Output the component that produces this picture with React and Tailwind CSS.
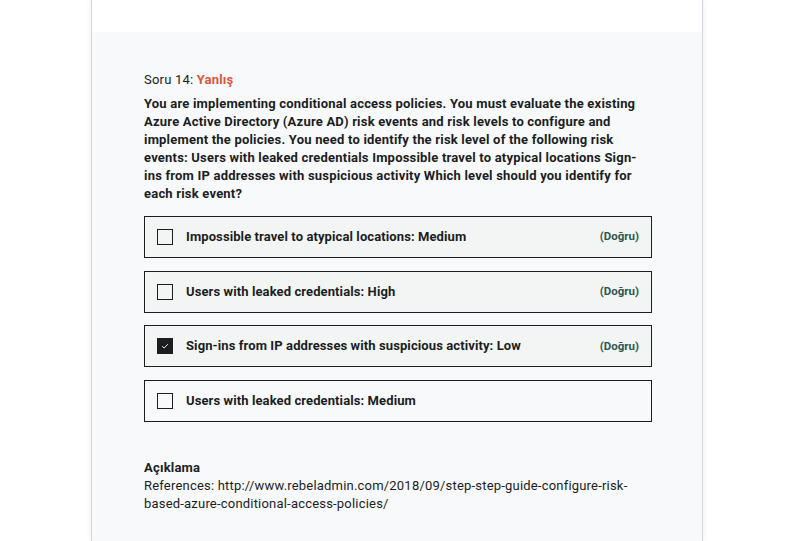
import React from "react";

const options = [
  { text: "Impossible travel to atypical locations: Medium", correct: true, checked: false },
  { text: "Users with leaked credentials: High", correct: true, checked: false },
  { text: "Sign-ins from IP addresses with suspicious activity: Low", correct: true, checked: true },
  { text: "Users with leaked credentials: Medium", correct: false, checked: false },
];

const Option = ({ text, correct, checked }) => (
  <div
    className={
      "flex items-center h-[42px] border border-[#1c1d1f] pl-[12px] pr-[12px] " +
      (correct ? "bg-[#f2f5f4]" : "bg-[#f7f9fa]")
    }
  >
    {checked ? (
      <span className="w-[16px] h-[16px] bg-[#1c1d1f] flex items-center justify-center shrink-0">
        <svg width="10" height="10" viewBox="0 0 10 10" fill="none">
          <path d="M2.2 5.3 L4.2 7 L7.8 3.2" stroke="#fff" strokeWidth="0.9" />
        </svg>
      </span>
    ) : (
      <span className="w-[16px] h-[16px] border border-[#1c1d1f] shrink-0" />
    )}
    <span className="ml-[13px] flex-1 text-[13px] font-bold text-[#1c1d1f] tracking-[0.1px]">{text}</span>
    {correct && <span className="text-[11.5px] font-bold text-[#2f5751]">(Doğru)</span>}
  </div>
);

export default function App() {
  return (
    <div className="w-[801px] h-[541px] bg-white overflow-hidden font-['Roboto',sans-serif]">
      <div className="ml-[91px] w-[612px] h-[541px] border-x border-[#d1d7dc] shadow-[0_0_6px_rgba(0,0,0,0.08)] flex flex-col">
        <div className="h-[32px] bg-white" />
        <div className="flex-1 bg-[#f7f9fa] pl-[52px] pr-[50px] pt-[39px]">
          <div className="text-[13px] text-[#1c1d1f] leading-[18px] tracking-[0.2px]">
            Soru 14: <span className="font-bold text-[#d9573c]">Yanlış</span>
          </div>
          <p className="mt-[6px] text-[13px] font-bold leading-[18px] text-[#1c1d1f] tracking-[0.2px]">
            You are implementing conditional access policies. You must evaluate the existing Azure Active
            Directory (Azure AD) risk events and risk levels to configure and implement the policies. You
            need to identify the risk level of the following risk events: Users with leaked credentials
            Impossible travel to atypical locations Sign-ins from IP addresses with suspicious activity Which
            level should you identify for each risk event?
          </p>
          <div className="mt-[13px] flex flex-col gap-[12.6px]">
            {options.map((o, i) => (
              <Option key={i} {...o} />
            ))}
          </div>
          <div className="mt-[37px] text-[13px] leading-[18px] text-[#1c1d1f] tracking-[0.2px]">
            <div className="font-bold">Açıklama</div>
            <div>
              References: http://www.rebeladmin.com/2018/09/step-step-guide-configure-risk-based-azure-conditional-access-policies/
            </div>
          </div>
        </div>
      </div>
    </div>
  );
}
